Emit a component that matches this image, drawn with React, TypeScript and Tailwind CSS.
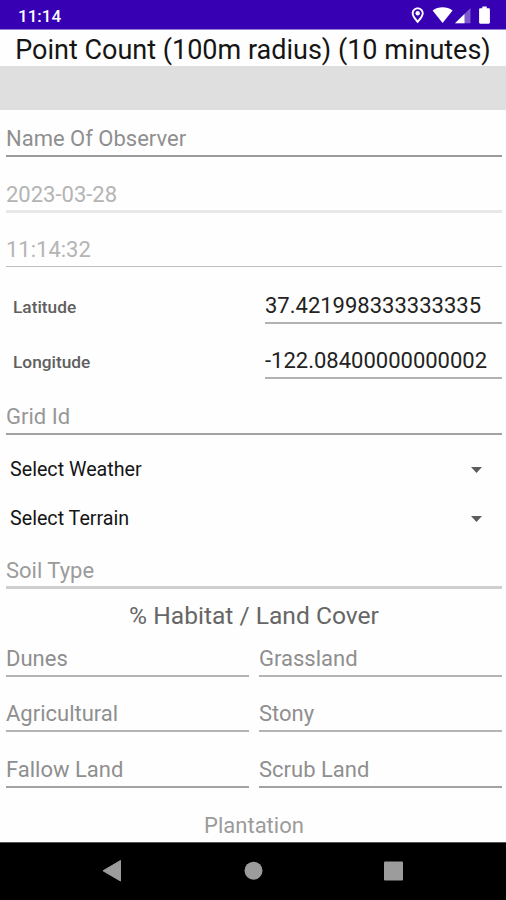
import type { ReactNode } from 'react'
import clsx from 'clsx'

export default function App() {
  return (
    <div className="flex h-[900px] w-[506px] flex-col overflow-hidden bg-[#fefefe] font-['Roboto',sans-serif]">
      <StatusBar />
      <h1 className="h-[36px] shrink-0 whitespace-nowrap text-center text-[27px] leading-[41px] text-[#151515]">
        Point Count (100m radius) (10 minutes)
      </h1>
      <div className="h-[44px] shrink-0 bg-[#dfdfdf]" />

      <main className="flex min-h-0 flex-1 flex-col overflow-hidden pl-[6px] pr-[4px]">
        <Field className="h-[47px] border-b-2 border-[#9b9b9b] pb-[3px] text-[#8f8f8f]">Name Of Observer</Field>
        <Field className="h-[56px] border-b-3 border-[#e8e8e8] pb-[2px] text-[#b4b4b4]">2023-03-28</Field>
        <Field className="h-[54px] border-b border-[#bcbcbc] pb-[3px] text-[#b4b4b4]">11:14:32</Field>

        <Coordinate className="h-[57px]" label="Latitude" value="37.421998333333335" />
        <Coordinate className="h-[55px]" label="Longitude" value="-122.08400000000002" />

        <Field className="h-[56px] border-b-2 border-[#a3a3a3] pb-[3px] text-[#979797]">Grid Id</Field>

        <Select className="mt-[10px]">Select Weather</Select>
        <Select>Select Terrain</Select>

        <Field className="h-[46px] border-b-3 border-[#cfcfcf] pb-[2px] text-[#9b9b9b]">Soil Type</Field>

        <h2 className="h-[34px] shrink-0 pt-[13px] text-center text-[24.6px] leading-[28px] text-[#666]">
          % Habitat / Land Cover
        </h2>

        <div className="grid shrink-0 grid-cols-2 gap-x-[10px]">
          <Field className="h-[54px] border-b-2 border-[#b4b4b4] pb-[3px] text-[#8f8f8f]">Dunes</Field>
          <Field className="h-[54px] border-b-2 border-[#b4b4b4] pb-[3px] text-[#8f8f8f]">Grassland</Field>
          <Field className="h-[55px] border-b-2 border-[#b4b4b4] pb-[3px] text-[#8f8f8f]">Agricultural</Field>
          <Field className="h-[55px] border-b-2 border-[#b4b4b4] pb-[3px] text-[#8f8f8f]">Stony</Field>
          <Field className="h-[56px] border-b-2 border-[#a3a3a3] pb-[3px] text-[#8f8f8f]">Fallow Land</Field>
          <Field className="h-[56px] border-b-2 border-[#a3a3a3] pb-[3px] text-[#8f8f8f]">Scrub Land</Field>
        </div>

        <div className="pt-[25px] text-center text-[22px] leading-[26px] text-[#9b9b9b]">Plantation</div>
      </main>

      <NavigationBar />
    </div>
  )
}

function StatusBar() {
  return (
    <header className="flex h-[30px] shrink-0 items-center justify-between border-b border-[#9480d6] bg-[#3700b3] pl-[18px] pr-[15px] text-white">
      <span className="pt-[3px] text-[17px] font-medium leading-none">11:14</span>
      <svg width="80" height="20" viewBox="411 5 80 20" fill="currentColor">
        <path
          fillRule="evenodd"
          d="M417.7 7.5c-3.4 0-6 2.6-6 5.8 0 4.1 6 9.9 6 9.9s6-5.8 6-9.9c0-3.2-2.6-5.8-6-5.8Zm0 1.8c2.3 0 4.1 1.8 4.1 4 0 2-2.2 4.9-4.1 7-1.9-2.1-4.1-5-4.1-7 0-2.2 1.8-4 4.1-4Z"
        />
        <circle cx="417.7" cy="13.2" r="2.2" />
        <path d="M432.6 10.6c2.9-2.2 6.4-3.3 10-3.3s7.1 1.1 10 3.3L442.6 23Z" />
        <path d="M470.5 8v15.2H455Z" opacity=".35" />
        <path d="M464.5 14v9.2H455Z" />
        <path d="M482.3 6.5h4.4v1.7h2c.7 0 1.2.5 1.2 1.2v13.1c0 .7-.5 1.2-1.2 1.2h-8.400c-.7 0-1.200-.5-1.200-1.200V9.400c0-.7.5-1.200 1.200-1.200h2Z" />
      </svg>
    </header>
  )
}

function Field({ className, children }: { className?: string; children: ReactNode }) {
  return (
    <div className={clsx('flex shrink-0 items-end whitespace-nowrap text-[22px] leading-[26px]', className)}>
      {children}
    </div>
  )
}

function Coordinate({ className, label, value }: { className?: string; label: string; value: string }) {
  return (
    <div className={clsx('grid shrink-0 grid-cols-[259px_1fr]', className)}>
      <span className="self-end pb-[4px] pl-[7px] text-[17.3px] font-medium leading-[26px] text-[#5f5f5f]">{label}</span>
      <Field className="border-b-2 border-[#b2b2b2] pb-[3px] text-[#222]">{value}</Field>
    </div>
  )
}

function Select({ className, children }: { className?: string; children: ReactNode }) {
  return (
    <div className={clsx('flex h-[49px] shrink-0 items-center justify-between pl-[4px] pr-[20px]', className)}>
      <span className="text-[19.7px] leading-[26px] text-[#151515]">{children}</span>
      <svg width="11" height="6" viewBox="0 0 11 6" className="fill-[#5c5c5c]">
        <path d="M0 0h11L5.5 6Z" />
      </svg>
    </div>
  )
}

function NavigationBar() {
  return (
    <nav className="h-[58px] shrink-0 border-t border-[#555] bg-black">
      <svg width="506" height="57" viewBox="0 843 506 57" fill="#9c9c9c">
        <path d="M120.5 860.5v20.5L103 870.8Z" stroke="#9c9c9c" strokeLinejoin="round" />
        <circle cx="253.5" cy="870.7" r="9" />
        <rect x="384" y="861.5" width="19" height="19" rx="1" />
      </svg>
    </nav>
  )
}
